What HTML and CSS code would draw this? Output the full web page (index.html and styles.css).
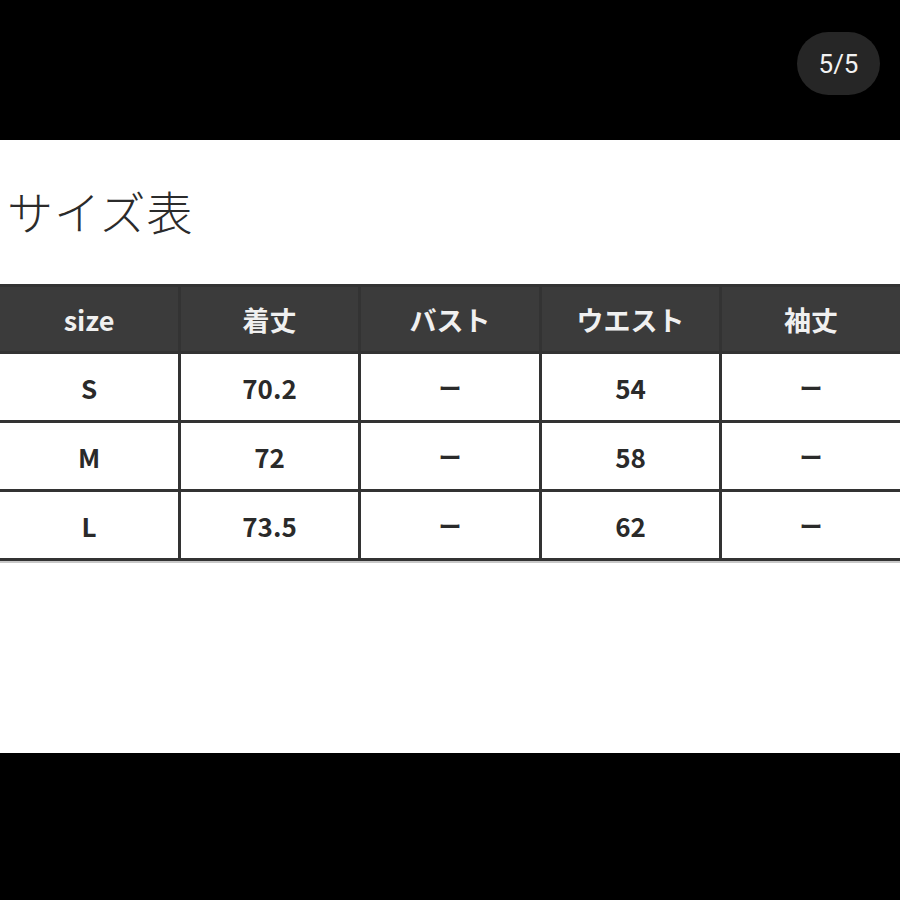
FILE: index.html
```html
<!DOCTYPE html>
<html lang="ja">
<head>
<meta charset="utf-8">
<title>サイズ表</title>
<link rel="stylesheet" href="styles.css">
</head>
<body>
<div class="viewer">
  <div class="band-top"></div>
  <div class="counter">5/5</div>
  <section class="sheet">
    <h1 class="title">サイズ表</h1>
    <div class="size-table">
      <div class="cell head">size</div>
      <div class="cell head">着丈</div>
      <div class="cell head">バスト</div>
      <div class="cell head">ウエスト</div>
      <div class="cell head">袖丈</div>

      <div class="cell">S</div>
      <div class="cell">70.2</div>
      <div class="cell dash">ー</div>
      <div class="cell">54</div>
      <div class="cell dash">ー</div>

      <div class="cell">M</div>
      <div class="cell">72</div>
      <div class="cell dash">ー</div>
      <div class="cell">58</div>
      <div class="cell dash">ー</div>

      <div class="cell">L</div>
      <div class="cell">73.5</div>
      <div class="cell dash">ー</div>
      <div class="cell">62</div>
      <div class="cell dash">ー</div>
    </div>
  </section>
  <div class="band-bottom"></div>
</div>
</body>
</html>
```

FILE: styles.css
```css
html, body {
  margin: 0;
  padding: 0;
  background: #000;
}

.viewer {
  position: relative;
  width: 900px;
  height: 900px;
  overflow: hidden;
  background: #000;
  display: flex;
  flex-direction: column;
}

.band-top {
  height: 140px;
  flex: none;
}

.band-bottom {
  flex: 1;
  background: #000;
}

.counter {
  position: absolute;
  top: 32px;
  right: 20px;
  width: 83px;
  height: 63px;
  border-radius: 32px;
  background: #262626;
  color: #f2f2f2;
  font-family: Roboto, "Liberation Sans", sans-serif;
  font-size: 26px;
  display: flex;
  align-items: center;
  justify-content: center;
}

.sheet {
  height: 613px;
  flex: none;
  background: #fff;
  display: flex;
  flex-direction: column;
}

.title {
  margin: 47px 0 0 7px;
  font-family: "Noto Sans CJK JP", sans-serif;
  font-weight: 300;
  font-size: 46px;
  line-height: 46px;
  height: 46px;
  color: #2b2b2b;
  letter-spacing: 1px;
}

.size-table {
  margin-top: 51px;
  display: grid;
  grid-template-columns: 178px 177px 178px 177px 178px;
  grid-template-rows: 64px 66px 66px 66px;
  gap: 3px;
  padding: 3px 0;
  background: #333;
  box-shadow: 0 2px 0 #c8c8c8;
}

.cell {
  background: #fff;
  display: flex;
  align-items: center;
  justify-content: center;
  font-family: "Noto Sans CJK JP", sans-serif;
  font-weight: 700;
  font-size: 26px;
  color: #2a2a2a;
}

.cell.head {
  background: #3b3b3b;
  color: #f0f0f0;
  font-size: 27px;
}

.cell.dash {
  font-size: 23px;
}
```
